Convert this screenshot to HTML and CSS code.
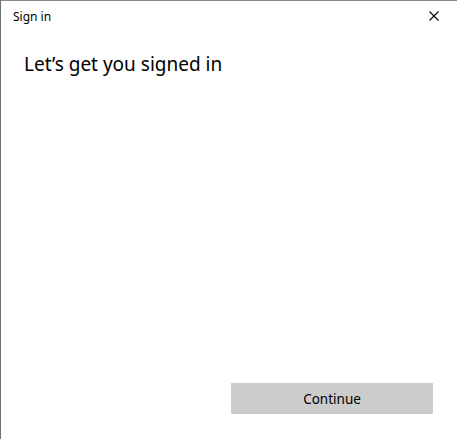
FILE: index.html
```html
<!DOCTYPE html>
<html>
<head>
<meta charset="utf-8">
<link rel="stylesheet" href="styles.css">
</head>
<body>
<div class="window">
  <div class="titlebar">
    <span class="title">Sign in</span>
    <button class="close" aria-label="Close">
      <svg width="10" height="10" viewBox="0 0 10 10"><path d="M0.5 0.5L9.5 9.5M9.5 0.5L0.5 9.5" stroke="#000" stroke-width="1.1" fill="none"/></svg>
    </button>
  </div>
  <div class="content">
    <h1 class="heading">Let’s get you signed in</h1>
  </div>
  <div class="footer">
    <button class="primary">Continue</button>
  </div>
</div>
</body>
</html>
```

FILE: styles.css
```css
html, body {
  margin: 0;
  padding: 0;
  background: #fff;
}
.window {
  width: 457px;
  height: 439px;
  box-sizing: border-box;
  border-top: 1px solid #8a8a8a;
  border-left: 1px solid #707070;
  display: flex;
  flex-direction: column;
  font-family: "Noto Sans", "Open Sans", sans-serif;
  color: #000;
}
.titlebar {
  height: 32px;
  display: flex;
  align-items: center;
  justify-content: space-between;
  padding-left: 12px;
}
.title {
  font-size: 12px;
  margin-top: -2px;
}
.close {
  width: 46px;
  height: 32px;
  border: none;
  background: transparent;
  padding: 0;
  display: flex;
  align-items: center;
  justify-content: center;
  margin-right: 1px;
  margin-top: -2px;
}
.close svg { display: block; margin-left: 2px; }
.content {
  flex: 1;
  padding: 0 23px;
}
.heading {
  font-size: 19px;
  font-weight: 400;
  margin: 17px 0 0;
  line-height: 28px;
}
.footer {
  display: flex;
  justify-content: flex-end;
  padding: 0 24px 25px 0;
}
.primary {
  width: 202px;
  height: 31px;
  border: none;
  background: #cccccc;
  font-family: inherit;
  font-size: 13.5px;
  color: #000;
  padding: 0;
}
```
